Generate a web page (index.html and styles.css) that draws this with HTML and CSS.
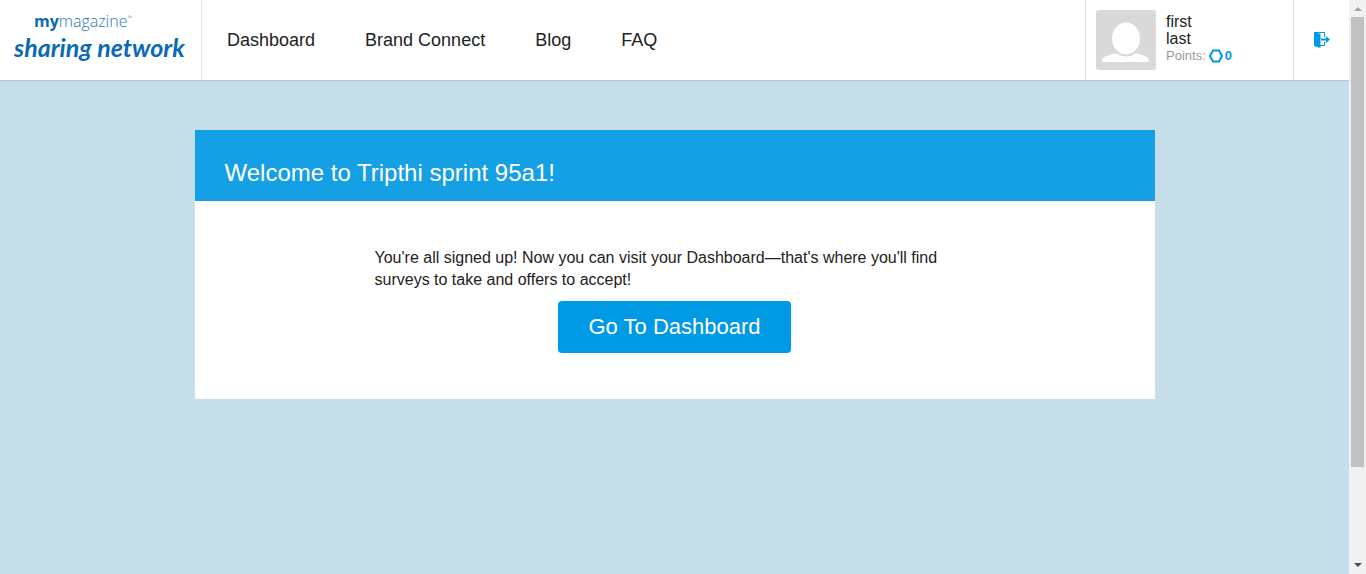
FILE: index.html
```html
<!DOCTYPE html>
<html lang="en">
<head>
<meta charset="utf-8">
<meta name="viewport" content="width=device-width, initial-scale=1">
<title>MyMagazine Sharing Network</title>
<link rel="stylesheet" href="styles.css">
</head>
<body>
<div class="shell">
  <div class="page">
    <header class="topbar">
      <a class="logo" href="#">
        <span class="logo-top"><b>my</b>magazine<span class="logo-mark">™</span></span>
        <span class="logo-script">sharing network</span>
      </a>
      <nav class="nav">
        <a href="#">Dashboard</a>
        <a href="#">Brand Connect</a>
        <a href="#">Blog</a>
        <a href="#">FAQ</a>
      </nav>
      <div class="profile">
        <svg class="avatar" viewBox="0 0 60 60" aria-hidden="true">
          <rect width="60" height="60" rx="3" fill="#d9d9d9"/>
          <path d="M6 52c0-3 1-5 5-6 5-2 9-3 14-3h10c5 0 9 1 14 3 3 1 4 3 4 6z" fill="#fff"/>
          <ellipse cx="30" cy="28.500" rx="15" ry="17" fill="#fff" stroke="#d9d9d9" stroke-width="2"/>
        </svg>
        <div class="identity">
          <span>first</span>
          <span>last</span>
          <span class="points">Points:
            <svg class="hexagon" viewBox="0 0 14 14" aria-hidden="true"><path d="M4 1.500h6L13 7l-3 5.500H4L1 7z" fill="none" stroke="#0099e5" stroke-width="2"/></svg>
            <b>0</b>
          </span>
        </div>
      </div>
      <a class="logout" href="#" aria-label="Log out">
        <svg viewBox="0 0 16 16" aria-hidden="true">
          <path d="M0 0h1l5.500 2v14L0 14z" fill="#0099e5"/>
          <path d="M1 .5h9.500V5M10.500 10v3.500H6" fill="none" stroke="#0099e5"/>
          <path d="M7 6.500h5V4l4 3.500-4 3.500V8.500H7z" fill="#0099e5"/>
        </svg>
      </a>
    </header>
    <main class="content">
      <section class="card">
        <h1 class="card-title">Welcome to Tripthi sprint 95a1!</h1>
        <div class="card-body">
          <p>You're all signed up! Now you can visit your Dashboard—that's where you'll find surveys to take and offers to accept!</p>
          <button class="cta" type="button">Go To Dashboard</button>
        </div>
      </section>
    </main>
  </div>
  <div class="scrollbar" aria-hidden="true">
    <svg viewBox="0 0 17 17"><path d="M5 11h8L9 7z" fill="#a3a3a3"/></svg>
    <div class="track"><div class="thumb"></div></div>
    <svg viewBox="0 0 17 17"><path d="M5 6h8l-4 4z" fill="#505050"/></svg>
  </div>
</div>
</body>
</html>
```
FILE: styles.css
```css
* {
  box-sizing: border-box;
}

body {
  margin: 0;
  color: #222;
  font-family: "Liberation Sans", Arial, sans-serif;
  font-size: 16px;
}

a {
  color: inherit;
  text-decoration: none;
}

svg {
  display: block;
}

.shell {
  display: grid;
  grid-template-columns: minmax(0, 1fr) 17px;
  min-height: 100vh;
}

.page {
  background: #c6ddea;
}

.topbar {
  display: flex;
  min-height: 81px;
  background: #fff;
  border-bottom: 1px solid #a9c8d9;
}

.logo {
  display: flex;
  flex-direction: column;
  justify-content: center;
  width: 202px;
  padding: 0 14px 8px;
  border-right: 1px solid #e5e5de;
  color: #0a6ab6;
  white-space: nowrap;
}

.logo-top {
  display: flex;
  padding-left: 20px;
  color: #1f78bd;
  font-family: "Open Sans", sans-serif;
  font-size: 16px;
  font-weight: 300;
  line-height: 22px;
}

.logo-top b {
  color: #0a6ab6;
  font-weight: 700;
}

.logo-mark {
  font-size: 6px;
  line-height: 16px;
}

.logo-script {
  font-family: Lato, sans-serif;
  font-size: 25px;
  font-style: italic;
  font-weight: 700;
  line-height: 30px;
}

.nav {
  display: flex;
  flex: 1;
  align-items: center;
  gap: 50px;
  padding: 0 25px;
  font-size: 18px;
}

.profile {
  display: flex;
  gap: 10px;
  width: 208px;
  padding: 10px;
  border-left: 1px solid #e5e5de;
}

.avatar {
  width: 60px;
  height: 60px;
}

.identity {
  display: flex;
  flex-direction: column;
  padding-top: 3px;
  line-height: 17px;
}

.points {
  display: flex;
  align-items: center;
  color: #999;
  font-size: 13px;
}

.points b {
  color: #0099e5;
}

.hexagon {
  width: 14px;
  height: 14px;
  margin: 0 2px 0 3px;
}

.logout {
  display: flex;
  align-items: center;
  justify-content: center;
  width: 56px;
  border-left: 1px solid #e5e5de;
}

.logout svg {
  width: 16px;
  height: 16px;
}

.content {
  padding: 49px 20px;
}

.card {
  max-width: 960px;
  margin: 0 auto;
  background: #fff;
}

.card-title {
  margin: 0;
  padding: 28px 30px 13px;
  background: #159fe4;
  color: #fff;
  font-size: 24px;
  font-weight: 400;
  line-height: 30px;
}

.card-body {
  display: flex;
  flex-direction: column;
  align-items: center;
  max-width: 600px;
  margin: 0 auto;
  padding: 46px 0;
}

.card-body p {
  margin: 0 0 10px;
  line-height: 22px;
}

.cta {
  padding: 0 30px;
  border: 0;
  border-radius: 4px;
  background: #0099e5;
  color: #fff;
  font: inherit;
  font-size: 22px;
  line-height: 52px;
}

.scrollbar {
  display: flex;
  flex-direction: column;
  background: #f1f1f1;
}

.scrollbar svg {
  width: 17px;
  height: 17px;
}

.track {
  flex: 1;
  padding: 0 2px;
}

.thumb {
  height: 83.333%;
  background: #c1c1c1;
}
```
